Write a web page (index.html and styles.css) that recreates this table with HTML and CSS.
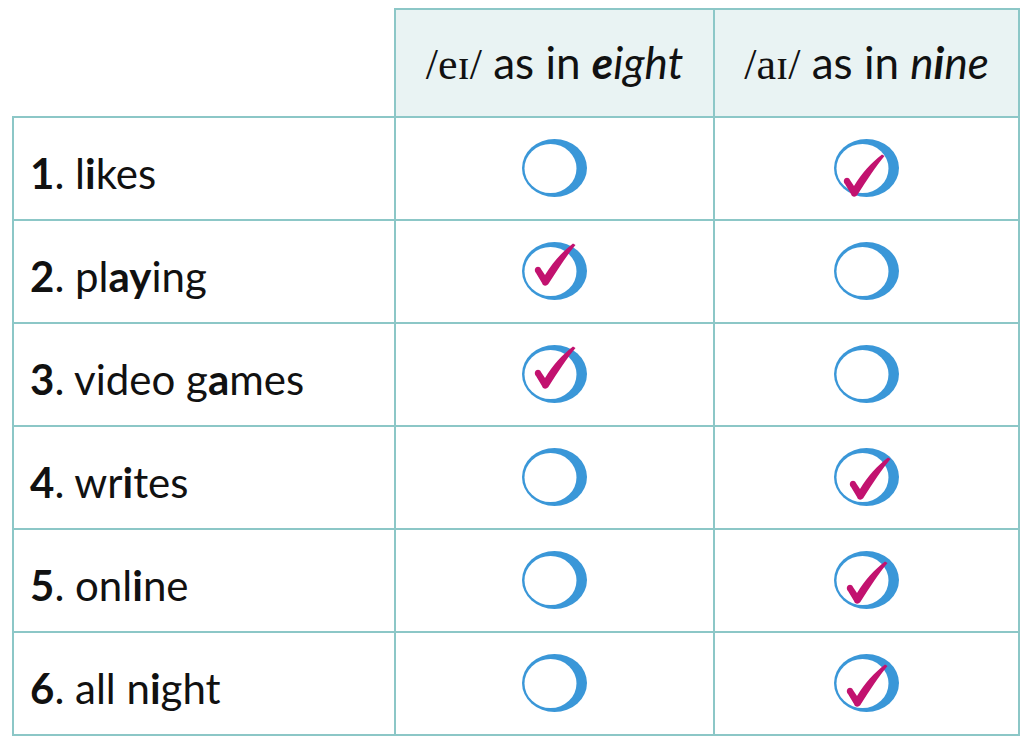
FILE: index.html
```html
<!DOCTYPE html>
<html lang="en">
<head>
<meta charset="utf-8">
<title>Vowel sounds</title>
<link rel="stylesheet" href="styles.css">
</head>
<body>
<svg class="defs" width="0" height="0" aria-hidden="true">
  <defs>
    <g id="ring">
      <ellipse cx="32.5" cy="29" rx="32.5" ry="29" fill="#3a97d8"/>
      <ellipse cx="28.5" cy="29.5" rx="26" ry="24.5" fill="#fff"/>
    </g>
    <path id="tick" d="M13,27 C14,24 18,24 19,27 L23,33 C31,20 40,10 51,1.5 L53.5,3 C45,13 36,27 27,41 C25,44.5 21,44.5 20,41 L14,31 C13,30 12.5,28.5 13,27 Z" fill="#c2126f"/>
  </defs>
</svg>
<table class="chart">
  <colgroup>
    <col class="c-word">
    <col class="c-ei">
    <col class="c-ai">
  </colgroup>
  <thead>
    <tr class="head-row">
      <th class="blank"></th>
      <th class="head"><span class="ipa">/eɪ/</span> as in <em><b>e</b>ight</em></th>
      <th class="head"><span class="ipa">/aɪ/</span> as in <em>n<b>i</b>ne</em></th>
    </tr>
  </thead>
  <tbody>
    <tr>
      <td class="word"><b>1</b>. l<b>i</b>kes</td>
      <td class="mark"><svg viewBox="0 0 66 60" class="circle"><use href="#ring"/></svg></td>
      <td class="mark"><svg viewBox="0 0 66 60" class="circle"><use href="#ring"/><use href="#tick" class="tick-lowest"/></svg></td>
    </tr>
    <tr>
      <td class="word"><b>2</b>. pl<b>a</b><b>y</b>ing</td>
      <td class="mark"><svg viewBox="0 0 66 60" class="circle"><use href="#ring"/><use href="#tick"/></svg></td>
      <td class="mark"><svg viewBox="0 0 66 60" class="circle"><use href="#ring"/></svg></td>
    </tr>
    <tr>
      <td class="word"><b>3</b>. video g<b>a</b>mes</td>
      <td class="mark"><svg viewBox="0 0 66 60" class="circle"><use href="#ring"/><use href="#tick"/></svg></td>
      <td class="mark"><svg viewBox="0 0 66 60" class="circle"><use href="#ring"/></svg></td>
    </tr>
    <tr>
      <td class="word"><b>4</b>. wr<b>i</b>tes</td>
      <td class="mark"><svg viewBox="0 0 66 60" class="circle"><use href="#ring"/></svg></td>
      <td class="mark"><svg viewBox="0 0 66 60" class="circle"><use href="#ring"/><use href="#tick" class="tick-low-right"/></svg></td>
    </tr>
    <tr>
      <td class="word"><b>5</b>. onl<b>i</b>ne</td>
      <td class="mark"><svg viewBox="0 0 66 60" class="circle"><use href="#ring"/></svg></td>
      <td class="mark"><svg viewBox="0 0 66 60" class="circle"><use href="#ring"/><use href="#tick" class="tick-low"/></svg></td>
    </tr>
    <tr>
      <td class="word"><b>6</b>. all n<b>i</b>ght</td>
      <td class="mark"><svg viewBox="0 0 66 60" class="circle"><use href="#ring"/></svg></td>
      <td class="mark"><svg viewBox="0 0 66 60" class="circle"><use href="#ring"/><use href="#tick" class="tick-low"/></svg></td>
    </tr>
  </tbody>
</table>
</body>
</html>
```
FILE: styles.css
```css
html, body {
  margin: 0;
  padding: 0;
  background: #fff;
}
body {
  font-family: Lato, "Open Sans", sans-serif;
  color: #111;
  padding: 8px 0 0 12px;
  line-height: 1;
}
.defs {
  position: absolute;
  width: 0;
  height: 0;
  overflow: hidden;
}
.chart {
  border-collapse: collapse;
  table-layout: fixed;
  width: 1006px;
}
.c-word { width: 382px; }
.c-ei { width: 319px; }
.c-ai { width: 305px; }
.chart tr { height: 103px; }
.chart tr.head-row { height: 108px; }
.chart th, .chart td {
  border: 2px solid #8cc7c7;
  padding: 0;
  line-height: 1;
}
.chart th.blank {
  border-top: none;
  border-left: none;
  background: #fff;
}
.head {
  background: #e9f3f3;
  font-weight: 400;
  font-size: 44px;
  text-align: center;
  vertical-align: middle;
  padding-top: 4px;
}
.head em b { font-weight: 700; }
.ipa {
  font-family: "Liberation Serif", serif;
  font-size: 44px;
}
.chart td.word {
  font-size: 42px;
  padding-left: 16px;
  padding-top: 8px;
  vertical-align: middle;
}
.word b { font-weight: 700; }
.mark {
  text-align: center;
  vertical-align: middle;
}
.circle {
  width: 66px;
  height: 60px;
  display: block;
  margin: 0 auto;
  overflow: visible;
}
.tick-low { transform: translate(0, 9px); }
.tick-low-right { transform: translate(3px, 8px); }
.tick-lowest { transform: translate(-3px, 14px); }
```
